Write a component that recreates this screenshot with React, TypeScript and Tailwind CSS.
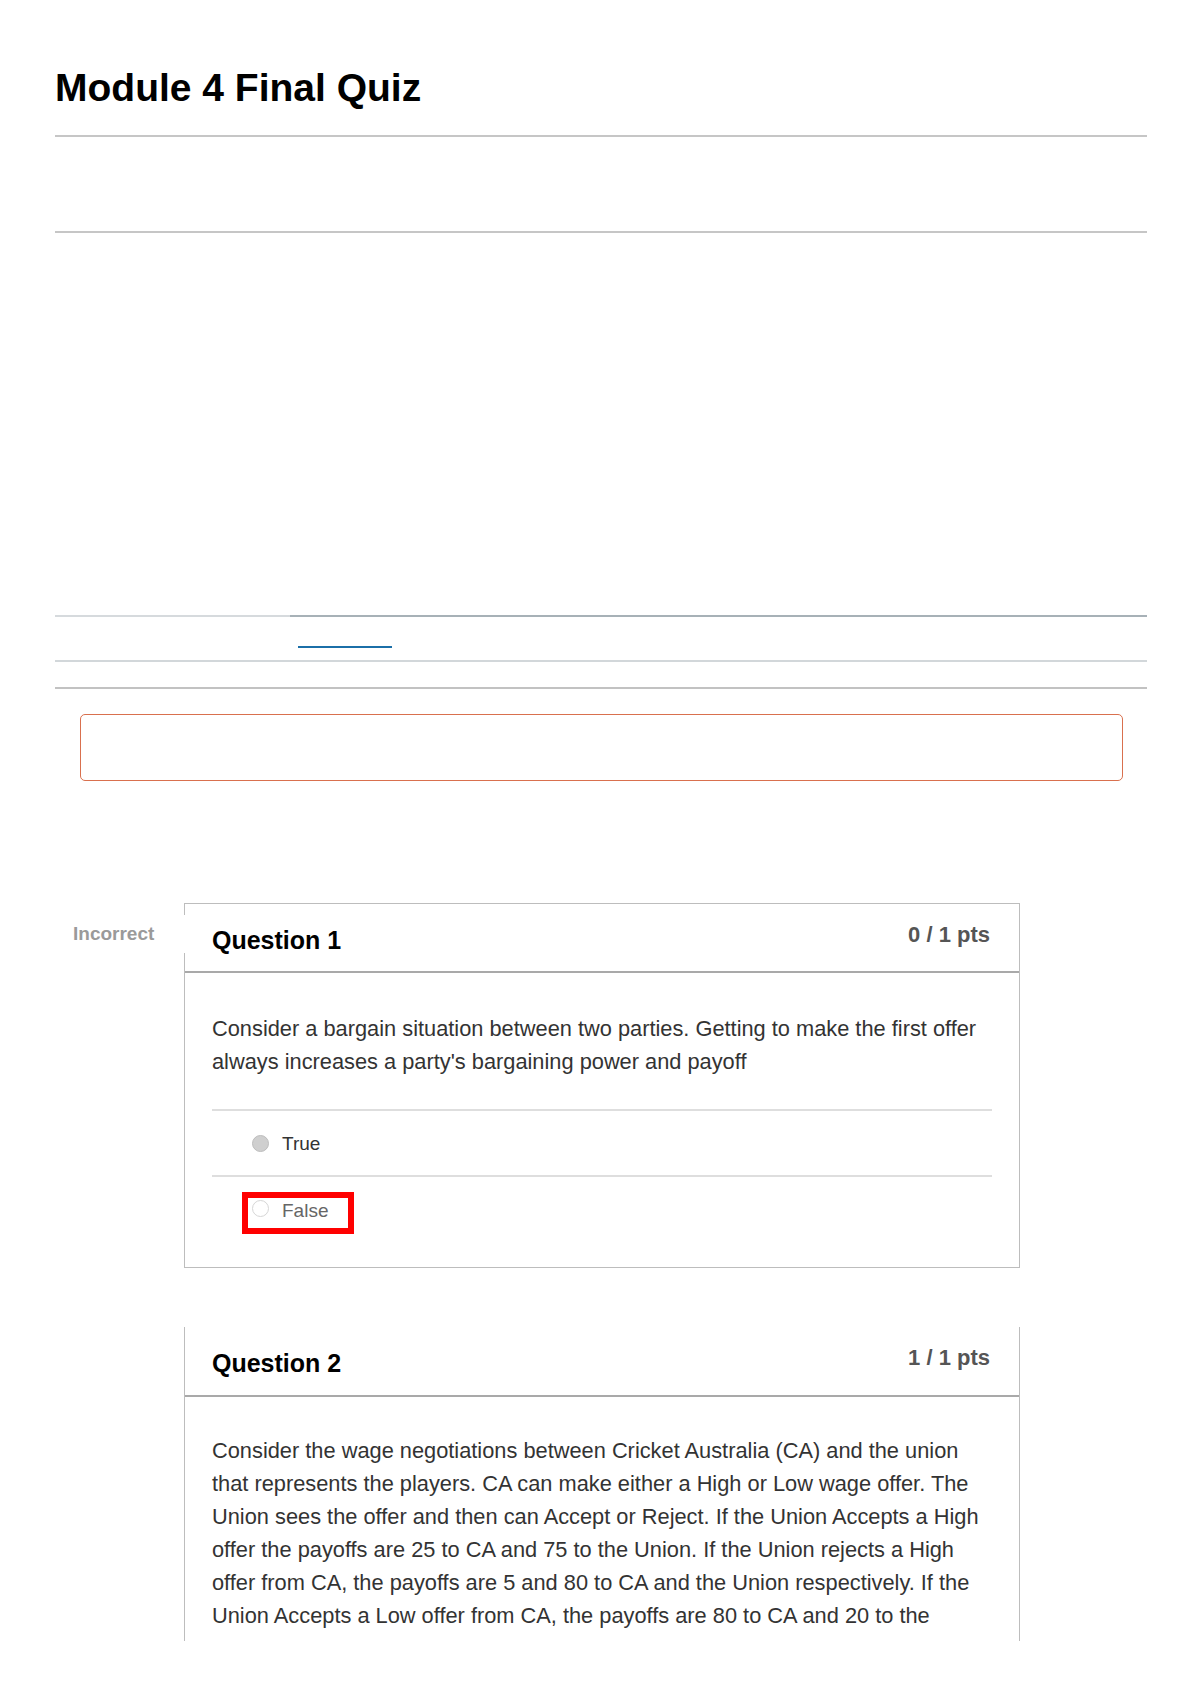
export default function App() {
  return (
    <div className="relative w-[1200px] h-[1697px] overflow-hidden bg-white font-['Liberation_Sans',Arial,sans-serif]">
      <div className="pl-[55px] pr-[53px] pt-[68px]">
        <h1 className="text-[39px] font-bold leading-[39px] text-black">Module 4 Final Quiz</h1>
        <div className="mt-[28px] h-[2px] bg-[#c6c6c6]" />
        <div className="mt-[94px] h-[2px] bg-[#c6c6c6]" />

        {/* tab strip */}
        <div className="mt-[382px] flex h-[2px]">
          <div className="w-[235px] bg-[#d6dadd]" />
          <div className="flex-1 bg-[#a7b1b7]" />
        </div>
        <div className="ml-[243px] mt-[29px] h-[2px] w-[94px] bg-[#1b6fa8]" />
        <div className="mt-[12px] h-[2px] bg-[#d2d7da]" />
        <div className="mt-[25px] h-[2px] bg-[#c2c2c2]" />

        <div className="ml-[25px] mr-[24px] mt-[25px] h-[67px] rounded-[5px] border-[1.5px] border-[#d9704e]" />

        {/* question 1 */}
        <div className="mt-[122px] flex">
          <div className="w-[129px] pl-[18px] pt-[21px] text-[19px] font-bold leading-[19px] text-[#9a9a9a]">
            Incorrect
          </div>
          <div className="relative w-[836px] border border-[#bdbdbd]">
            <div className="absolute left-[-1px] top-[11px] h-[38px] w-[1px] bg-white" />
            <div className="flex h-[69px] justify-between border-b-2 border-[#a9a9a9] pl-[27px] pr-[29px]">
              <div className="pt-[24px] text-[25px] font-bold leading-[25px] text-black">Question 1</div>
              <div className="pt-[20px] text-[22px] font-bold leading-[22px] text-[#555]">0 / 1 pts</div>
            </div>
            <div className="px-[27px] pt-[39px] pb-[33px]">
              <p className="text-[21.8px] leading-[33px] text-[#333]">
                Consider a bargain situation between two parties. Getting to make the first offer always
                increases a party's bargaining power and payoff
              </p>
              <div className="mt-[31px] h-[2px] bg-[#dedede]" />
              <div className="flex h-[64px] items-center">
                <span className="ml-[40px] h-[17px] w-[17px] rounded-full border border-[#bdbdbd] bg-[#cfcfcf]" />
                <span className="ml-[13px] text-[19px] leading-[19px] text-[#333]">True</span>
              </div>
              <div className="h-[2px] bg-[#dedede]" />
              <div className="pt-[15px]">
                <div className="ml-[30px] flex h-[42px] w-[112px] items-start border-[6px] border-[#ff0000] pl-[4px] pt-[2px]">
                  <span className="h-[17px] w-[17px] rounded-full border border-[#d6d6d6] bg-white" />
                  <span className="ml-[13px] mt-[1px] text-[19px] leading-[19px] text-[#666]">False</span>
                </div>
              </div>
            </div>
          </div>
        </div>

        {/* question 2, cut at the page edge */}
        <div className="mt-[59px] flex">
          <div className="w-[129px]" />
          <div className="h-[314px] w-[836px] overflow-hidden border-x border-[#bdbdbd]">
            <div className="flex h-[70px] justify-between border-b-2 border-[#a9a9a9] pl-[27px] pr-[29px]">
              <div className="pt-[24px] text-[25px] font-bold leading-[25px] text-black">Question 2</div>
              <div className="pt-[20px] text-[22px] font-bold leading-[22px] text-[#555]">1 / 1 pts</div>
            </div>
            <div className="px-[27px] pt-[37px]">
              <p className="text-[21.8px] leading-[33px] text-[#333]">
                Consider the wage negotiations between Cricket Australia (CA) and the union that represents
                the players. CA can make either a High or Low wage offer. The Union sees the offer and then
                can Accept or Reject. If the Union Accepts a High offer the payoffs are 25 to CA and 75 to the
                Union. If the Union rejects a High offer from CA, the payoffs are 5 and 80 to CA and the Union
                respectively. If the Union Accepts a Low offer from CA, the payoffs are 80 to CA and 20 to the
              </p>
            </div>
          </div>
        </div>
      </div>
    </div>
  );
}
